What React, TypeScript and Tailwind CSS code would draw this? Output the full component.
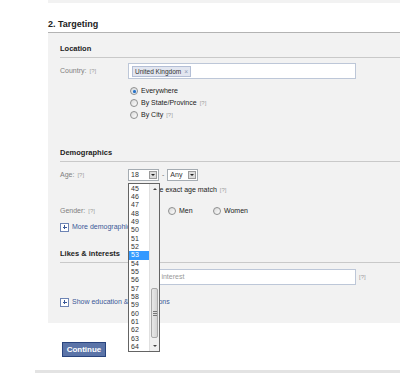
import React from 'react';

const ages = Array.from({ length: 20 }, (_, i) => 45 + i);

function Radio({ checked = false }: { checked?: boolean }) {
  return (
    <span className="relative inline-block w-[8px] h-[8px] rounded-full border border-[#8e8f8f] bg-gradient-to-br from-[#d8d8d8] to-white shrink-0">
      {checked && <span className="absolute left-[1.5px] top-[1.5px] w-[3px] h-[3px] rounded-full bg-[#2a6fc0] shadow-[0_0_1px_#4aa3ff]" />}
    </span>
  );
}

function Help({ gap = true }: { gap?: boolean }) {
  return <span className={`text-[6px] text-[#a0a0a0] ${gap ? 'ml-[3px]' : ''}`}>[?]</span>;
}

function PlusBox() {
  return (
    <span className="relative inline-block w-[9px] h-[9px] border border-[#6d84b4] bg-white shrink-0 mr-[3px]">
      <span className="absolute left-[1.5px] top-[3px] w-[4px] h-[1px] bg-[#3b5998]" />
      <span className="absolute left-[3px] top-[1.5px] w-[1px] h-[4px] bg-[#3b5998]" />
    </span>
  );
}

function Select({ value, width }: { value: string; width: string }) {
  return (
    <div className={`${width} h-[12px] border border-[#a5acb2] bg-white flex items-center justify-between`}>
      <span className="pl-[2px] text-[7px] text-[#333]">{value}</span>
      <span className="w-[8px] h-[8px] mr-[1px] bg-[#dcdcdc] border border-[#9a9a9a] flex items-center justify-center">
        <span className="w-0 h-0 border-l-[2px] border-r-[2px] border-t-[2px] border-l-transparent border-r-transparent border-t-[#222]" />
      </span>
    </div>
  );
}

function Heading({ title, height }: { title: string; height: string }) {
  return (
    <div className={`${height} flex items-end pb-[3px] border-b border-[#c9c9c9]`}>
      <span className="text-[7.5px] leading-[10px] font-bold text-[#222]">{title}</span>
    </div>
  );
}

function Label({ text }: { text: string }) {
  return (
    <div className="w-[68px] shrink-0 flex items-center text-[7px] text-[#808080]">
      {text}
      <Help />
    </div>
  );
}

export default function App() {
  return (
    <div
      className="relative w-[400px] h-[373px] overflow-hidden bg-white text-[#222]"
      style={{ fontFamily: '"Liberation Sans", Arial, sans-serif' }}
    >
      <div className="ml-[48px] h-[3px] bg-[#f2f2f2]" />

      <div className="ml-[48px] h-[30px] flex items-end pb-[3px] border-b border-[#b3b3b3]">
        <span className="text-[9px] leading-[10px] font-bold text-[#222]">2. Targeting</span>
      </div>

      <div className="ml-[48px] h-[290px] bg-[#f2f2f2] pl-[12px]">
        <div className="h-[25px] flex items-end pb-[3px] border-b border-[#c9c9c9]">
          <span className="text-[7.5px] leading-[10px] font-bold text-[#222]">Location</span>
        </div>

        <div className="mt-[5px] flex h-[16px]">
          <Label text="Country:" />
          <div className="w-[228px] h-[16px] border border-[#bdc7d8] bg-white flex items-center pl-[3px]">
            <span className="h-[11px] px-[2px] bg-[#e2e6f0] border border-[#b4bfd6] text-[6.5px] leading-[9px] text-[#333] flex items-center">
              United Kingdom <span className="ml-[3px] text-[#8a97b4]">×</span>
            </span>
          </div>
        </div>

        <div className="mt-[6px] ml-[70px] text-[7px]">
          <div className="h-[12px] flex items-center gap-[3px]">
            <Radio checked />
            <span>Everywhere</span>
          </div>
          <div className="h-[12px] flex items-center gap-[3px]">
            <Radio />
            <span>By State/Province</span>
            <Help gap={false} />
          </div>
          <div className="h-[12px] flex items-center gap-[3px]">
            <Radio />
            <span>By City</span>
            <Help gap={false} />
          </div>
        </div>

        <Heading title="Demographics" height="h-[41px]" />

        <div className="mt-[7px] flex h-[12px]">
          <Label text="Age:" />
          <div className="flex items-center">
            <Select value="18" width="w-[31px]" />
            <span className="mx-[3px] text-[7px] text-[#666]">-</span>
            <Select value="Any" width="w-[31px]" />
          </div>
        </div>

        <div className="mt-[3px] ml-[68px] h-[12px] flex items-center gap-[3px] text-[7px]">
          <span className="w-[8px] h-[8px] border border-[#8e8f8f] bg-white" />
          <span>Require exact age match</span>
          <Help gap={false} />
        </div>

        <div className="mt-[9px] flex h-[12px]">
          <Label text="Gender:" />
          <div className="flex items-center text-[7px]">
            <Radio checked />
            <span className="ml-[3px] w-[29px]">All</span>
            <Radio />
            <span className="ml-[3px] w-[34px]">Men</span>
            <Radio />
            <span className="ml-[3px]">Women</span>
          </div>
        </div>

        <div className="mt-[4px] h-[12px] flex items-center text-[7px] text-[#3b5998]">
          <PlusBox />
          More demographics
        </div>

        <Heading title="Likes & interests" height="h-[30px]" />

        <div className="mt-[6px] flex h-[16px]">
          <div className="w-[68px] shrink-0" />
          <div className="w-[228px] h-[16px] border border-[#bdc7d8] bg-white flex items-center pl-[4px] text-[7px] text-[#999]">
            Enter an interest
          </div>
          <div className="flex items-center">
            <Help />
          </div>
        </div>

        <div className="mt-[11px] h-[12px] flex items-center text-[7px] text-[#3b5998]">
          <PlusBox />
          Show education &amp; work options
        </div>
      </div>

      <div className="mt-[19px] ml-[62px] w-[44px] h-[15px] bg-[#5b74a8] border border-[#29447e] flex items-center justify-center text-[8px] font-bold text-white">
        Continue
      </div>

      <div className="mt-[13px] ml-[35px] h-[3px] bg-[#e3e3e3]" />

      {/* open age dropdown */}
      <div className="absolute left-[128px] top-[183px] w-[32px] h-[169px] border border-[#646464] bg-white flex">
        <div className="flex-1 pt-[0.5px]">
          {ages.map((a) => (
            <div
              key={a}
              className={`h-[8.35px] leading-[8.35px] pl-[2px] text-[7px] ${a === 53 ? 'bg-[#3399ff] text-white' : 'text-[#333]'}`}
            >
              {a}
            </div>
          ))}
        </div>
        <div className="w-[10px] bg-[#f0f0f0] border-l border-[#e0e0e0] flex flex-col">
          <div className="h-[10px] flex items-center justify-center">
            <span className="w-0 h-0 border-l-[2px] border-r-[2px] border-b-[2px] border-l-transparent border-r-transparent border-b-[#444]" />
          </div>
          <div className="mt-[94px] mx-[1px] h-[50px] rounded-[2px] border border-[#a8a8a8] bg-gradient-to-r from-[#e8e8e8] to-[#d4d4d4] flex flex-col items-center justify-center gap-[1px]">
            <span className="w-[4px] h-[1px] bg-[#777]" />
            <span className="w-[4px] h-[1px] bg-[#777]" />
            <span className="w-[4px] h-[1px] bg-[#777]" />
          </div>
          <div className="mt-auto h-[10px] flex items-center justify-center">
            <span className="w-0 h-0 border-l-[2px] border-r-[2px] border-t-[2px] border-l-transparent border-r-transparent border-t-[#444]" />
          </div>
        </div>
      </div>
    </div>
  );
}
